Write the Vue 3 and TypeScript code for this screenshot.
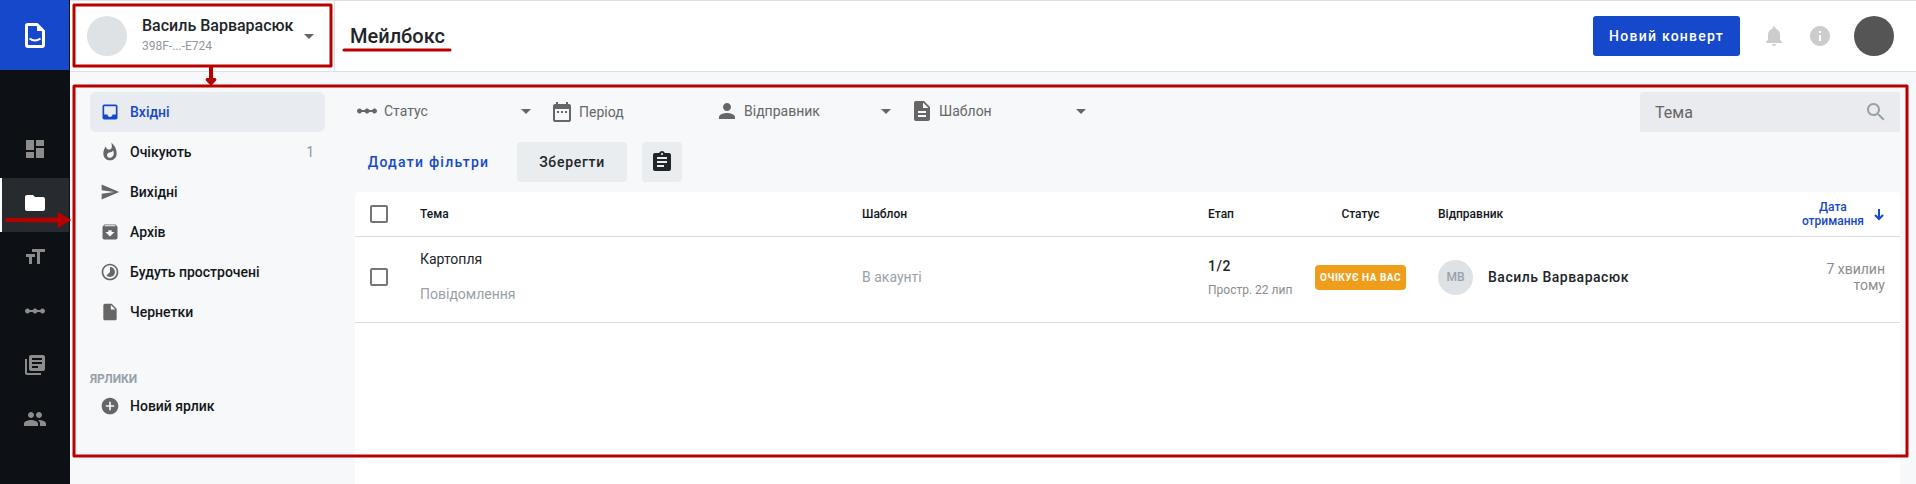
<script setup lang="ts">
interface MenuItem {
  label: string
  path: string
  count?: number
  active?: boolean
}

interface Filter {
  key: string
  label: string
  path: string
  caret: boolean
}

const scalePath =
  'M19.5 9.5c-1.03 0-1.9.62-2.29 1.5h-2.92c-.39-.88-1.26-1.5-2.29-1.5s-1.9.62-2.29 1.5H6.79c-.39-.88-1.26-1.5-2.29-1.5C3.12 9.5 2 10.62 2 12s1.12 2.5 2.5 2.5c1.03 0 1.9-.62 2.29-1.5h2.92c.39.88 1.26 1.5 2.29 1.5s1.9-.62 2.29-1.5h2.92c.39.88 1.26 1.5 2.29 1.5 1.38 0 2.5-1.12 2.5-2.5s-1.12-2.5-2.5-2.5z'

const rail = [
  { name: 'dashboard', path: 'M3 13h8V3H3v10zm0 8h8v-6H3v6zm10 0h8V11h-8v10zm0-18v6h8V3h-8z' },
  { name: 'mailbox', active: true, path: 'M10 4H4c-1.1 0-1.99.9-1.99 2L2 18c0 1.1.9 2 2 2h16c1.1 0 2-.9 2-2V8c0-1.1-.9-2-2-2h-8l-2-2z' },
  { name: 'templates', path: 'M9 4v3h5v12h3V7h5V4H9zm-6 8h3v7h3v-7h3V9H3v3z' },
  { name: 'scenarios', path: scalePath },
  { name: 'directories', path: 'M4 6H2v14c0 1.1.9 2 2 2h14v-2H4V6zm16-4H8c-1.1 0-2 .9-2 2v12c0 1.1.9 2 2 2h12c1.1 0 2-.9 2-2V4c0-1.1-.9-2-2-2zm-1 9H9V9h10v2zm-4 4H9v-2h6v2zm4-8H9V5h10v2z' },
  { name: 'users', path: 'M16 11c1.66 0 2.99-1.34 2.99-3S17.66 5 16 5c-1.66 0-3 1.34-3 3s1.34 3 3 3zm-8 0c1.66 0 2.99-1.34 2.99-3S9.66 5 8 5C6.34 5 5 6.34 5 8s1.34 3 3 3zm0 2c-2.33 0-7 1.17-7 3.5V19h14v-2.5c0-2.33-4.67-3.5-7-3.5zm8 0c-.29 0-.62.02-.97.05 1.16.84 1.97 1.97 1.97 3.45V19h6v-2.5c0-2.33-4.67-3.5-7-3.5z' },
]

const menu: MenuItem[] = [
  { label: 'Вхідні', active: true, path: 'M19 3H4.99c-1.11 0-1.98.89-1.98 2L3 19c0 1.1.88 2 1.99 2H19c1.1 0 2-.9 2-2V5c0-1.11-.9-2-2-2zm0 12h-4c0 1.66-1.35 3-3 3s-3-1.34-3-3H4.99V5H19v10z' },
  { label: 'Очікують', count: 1, path: 'M13.5.67s.74 2.65.74 4.8c0 2.06-1.35 3.73-3.41 3.73-2.07 0-3.63-1.67-3.63-3.73l.03-.36C5.21 7.51 4 10.62 4 14c0 4.42 3.58 8 8 8s8-3.58 8-8C20 8.61 17.41 3.8 13.5.67zM11.71 19c-1.78 0-3.22-1.4-3.22-3.14 0-1.62 1.05-2.76 2.81-3.12 1.77-.36 3.6-1.21 4.62-2.58.39 1.29.59 2.65.59 4.04 0 2.65-2.15 4.8-4.8 4.8z' },
  { label: 'Вихідні', path: 'M2.01 21L23 12 2.01 3 2 10l15 2-15 2z' },
  { label: 'Архів', path: 'M20.54 5.23l-1.39-1.68C18.88 3.21 18.47 3 18 3H6c-.47 0-.88.21-1.16.55L3.46 5.23C3.17 5.57 3 6.02 3 6.5V19c0 1.1.9 2 2 2h14c1.1 0 2-.9 2-2V6.5c0-.48-.17-.93-.46-1.27zM12 17.5L6.5 12H10v-2h4v2h3.5L12 17.5zM5.12 5l.81-1h12l.94 1H5.12z' },
  { label: 'Будуть прострочені', path: 'M16.24 7.76C15.07 6.59 13.54 6 12 6v6l-4.24 4.24c2.34 2.34 6.14 2.34 8.49 0 2.34-2.34 2.34-6.14-.01-8.48zM12 2C6.48 2 2 6.48 2 12s4.48 10 10 10 10-4.48 10-10S17.52 2 12 2zm0 18c-4.42 0-8-3.58-8-8s3.58-8 8-8 8 3.58 8 8-3.58 8-8 8z' },
  { label: 'Чернетки', path: 'M6 2c-1.1 0-1.99.9-1.99 2L4 20c0 1.1.89 2 1.99 2H18c1.1 0 2-.9 2-2V8l-6-6H6zm7 7V3.5L18.5 9H13z' },
]

const filters: Filter[] = [
  { key: 'status', label: 'Статус', path: scalePath, caret: true },
  { key: 'period', label: 'Період', caret: false, path: 'M9 11H7v2h2v-2zm4 0h-2v2h2v-2zm4 0h-2v2h2v-2zm2-7h-1V2h-2v2H8V2H6v2H5c-1.11 0-1.99.9-1.99 2L3 20c0 1.1.89 2 2 2h14c1.1 0 2-.9 2-2V6c0-1.1-.9-2-2-2zm0 16H5V9h14v11z' },
  { key: 'sender', label: 'Відправник', caret: true, path: 'M12 12c2.21 0 4-1.79 4-4s-1.79-4-4-4-4 1.79-4 4 1.79 4 4 4zm0 2c-2.67 0-8 1.34-8 4v2h16v-2c0-2.66-5.33-4-8-4z' },
  { key: 'template', label: 'Шаблон', caret: true, path: 'M14 2H6c-1.1 0-1.99.9-1.99 2L4 20c0 1.1.89 2 1.99 2H18c1.1 0 2-.9 2-2V8l-6-6zm2 16H8v-2h8v2zm0-4H8v-2h8v2zm-3-5V3.5L18.5 9H13z' },
]
</script>

<template>
  <div class="app">
    <aside class="rail">
      <div class="logo">
        <svg width="20" height="25" viewBox="0 0 20 25">
          <path d="M2.5 1.5H12L18.5 8V22a1.5 1.5 0 0 1-1.5 1.5H3A1.5 1.5 0 0 1 1.5 22V2.5a1 1 0 0 1 1-1z" fill="none" stroke="#fff" stroke-width="3" />
          <path d="M12 1v7h7z" fill="#fff" />
          <path d="M4.500 15.500q5.500 4 11 0" fill="none" stroke="#fff" stroke-width="2" />
        </svg>
      </div>
      <nav class="rail-nav">
        <a v-for="item in rail" :key="item.name" class="rail-item" :class="{ active: item.active }">
          <svg class="i24" viewBox="0 0 24 24"><path :d="item.path" /></svg>
        </a>
      </nav>
    </aside>

    <div class="main">
      <header class="header">
        <div class="account">
          <span class="avatar"></span>
          <div class="account-text">
            <div class="account-name">Василь Варварасюк</div>
            <div class="account-id">398F-...-E724</div>
          </div>
          <i class="caret"></i>
        </div>
        <h1 class="title">Мейлбокс</h1>
        <div class="header-actions">
          <button class="primary">Новий конверт</button>
          <svg class="i24 bell" viewBox="0 0 24 24"><path d="M12 22c1.1 0 2-.9 2-2h-4c0 1.1.89 2 2 2zm6-6v-5c0-3.07-1.64-5.64-4.5-6.32V4c0-.83-.67-1.5-1.5-1.5s-1.5.67-1.5 1.5v.68C7.63 5.36 6 7.92 6 11v5l-2 2v1h16v-1l-2-2z" /></svg>
          <svg class="i24 info" viewBox="0 0 24 24"><path d="M12 2C6.48 2 2 6.48 2 12s4.48 10 10 10 10-4.48 10-10S17.52 2 12 2zm1 15h-2v-6h2v6zm0-8h-2V7h2v2z" /></svg>
          <span class="avatar dark"></span>
        </div>
      </header>

      <div class="body">
        <nav class="menu">
          <a v-for="item in menu" :key="item.label" class="menu-item" :class="{ active: item.active }">
            <svg class="i20" viewBox="0 0 24 24"><path :d="item.path" /></svg>
            <span>{{ item.label }}</span>
            <span v-if="item.count" class="count">{{ item.count }}</span>
          </a>
          <div class="menu-title">ЯРЛИКИ</div>
          <a class="menu-item">
            <svg class="i20" viewBox="0 0 24 24"><path d="M12 2C6.48 2 2 6.48 2 12s4.48 10 10 10 10-4.48 10-10S17.52 2 12 2zm5 11h-4v4h-2v-4H7v-2h4V7h2v4h4v2z" /></svg>
            <span>Новий ярлик</span>
          </a>
        </nav>

        <section class="content">
          <div class="filters">
            <div v-for="f in filters" :key="f.key" class="filter" :class="f.key">
              <svg class="i24" viewBox="0 0 24 24"><path :d="f.path" /></svg>
              <span>{{ f.label }}</span>
              <i v-if="f.caret" class="caret"></i>
            </div>
            <div class="search">
              <span>Тема</span>
              <svg class="i24" viewBox="0 0 24 24"><path d="M15.5 14h-.79l-.28-.27C15.41 12.59 16 11.11 16 9.5 16 5.91 13.09 3 9.5 3S3 5.91 3 9.5 5.91 16 9.5 16c1.61 0 3.09-.59 4.23-1.57l.27.28v.79l5 4.99L20.49 19l-4.99-5zm-6 0C7.01 14 5 11.99 5 9.5S7.01 5 9.5 5 14 7.01 14 9.5 11.99 14 9.5 14z" /></svg>
            </div>
          </div>

          <div class="filter-actions">
            <button class="link">Додати фільтри</button>
            <button class="secondary">Зберегти</button>
            <button class="square">
              <svg class="i24" viewBox="0 0 24 24"><path d="M19 3h-4.18C14.4 1.84 13.3 1 12 1c-1.3 0-2.4.84-2.82 2H5c-1.1 0-2 .9-2 2v14c0 1.1.9 2 2 2h14c1.1 0 2-.9 2-2V5c0-1.1-.9-2-2-2zm-7 0c.55 0 1 .45 1 1s-.45 1-1 1-1-.45-1-1 .45-1 1-1zm2 14H7v-2h7v2zm3-4H7v-2h10v2zm0-4H7V7h10v2z" /></svg>
            </button>
          </div>

          <div class="table">
            <div class="row head">
              <i class="check"></i>
              <span>Тема</span>
              <span>Шаблон</span>
              <span>Етап</span>
              <span class="center">Статус</span>
              <span>Відправник</span>
              <span class="sorted">
                <span>Дата<br />отримання</span>
                <svg width="12" height="13" viewBox="0 0 12 13"><path d="M6 1v10M2 7l4 4 4-4" fill="none" stroke="#1648cc" stroke-width="2" /></svg>
              </span>
            </div>
            <div class="row item">
              <i class="check"></i>
              <div class="subject">
                <div>Картопля</div>
                <div class="muted message">Повідомлення</div>
              </div>
              <span class="muted">В акаунті</span>
              <div class="stage">
                <div class="step">1/2</div>
                <div class="due">Простр. 22 лип</div>
              </div>
              <span class="badge">ОЧІКУЄ НА ВАС</span>
              <div class="sender-cell">
                <span class="initials">МВ</span>
                <span class="sender-name">Василь Варварасюк</span>
              </div>
              <span class="date">7 хвилин<br />тому</span>
            </div>
          </div>
        </section>
      </div>
    </div>

    <svg class="marks" width="1916" height="484" viewBox="0 0 1916 484">
      <g fill="none" stroke="#b90000" stroke-width="3" stroke-linejoin="round">
        <rect x="74" y="5" width="257" height="61" />
        <rect x="74" y="86" width="1833" height="370" />
        <path d="M344 50H450" stroke-linecap="round" />
      </g>
      <g fill="#b90000" stroke="#b90000" stroke-linejoin="round">
        <path d="M209.500 66h3v12.500h3l.5 1.500-4 4.500h-2l-4-4.500.5-1.500h3z" />
        <path d="M7 218.500l51-.5v-5.500l12.500 7.500-12.500 7.500v-5.500l-51-.5a1.500 1.500 0 0 1 0-3z" />
      </g>
    </svg>
  </div>
</template>

<style>
body {
  margin: 0;
  overflow: hidden;
}
</style>

<style scoped>
.app {
  position: relative;
  display: flex;
  width: 1916px;
  height: 484px;
  overflow: hidden;
  background: #f7f8fa;
  color: #212529;
  font: 400 14px/20px Roboto, 'Liberation Sans', sans-serif;
}
.app * {
  box-sizing: border-box;
}
svg {
  display: block;
  flex: none;
}
button {
  border: 0;
  padding: 0;
  font: inherit;
}
.i24 {
  width: 24px;
  height: 24px;
  fill: currentColor;
}
.i20 {
  width: 20px;
  height: 20px;
  fill: currentColor;
}
.marks {
  position: absolute;
  inset: 0;
}

.rail {
  width: 70px;
  background: #0d1014;
}
.logo {
  width: 69px;
  height: 70px;
  padding: 23px 0 0 25px;
  background: #1648cc;
}
.rail-nav {
  padding-top: 54px;
}
.rail-item {
  display: flex;
  width: 69px;
  height: 54px;
  padding: 13px 0 0 23px;
  color: #8c8c8c;
}
.rail-item.active {
  background: #272a2e;
  border-left: 2px solid #fff;
  padding-left: 21px;
  color: #fff;
}

.main {
  flex: 1;
  min-width: 0;
}
.header {
  display: flex;
  height: 72px;
  border: solid #dce0e4;
  border-width: 1px 0;
  background: #fff;
}
.account {
  display: flex;
  width: 265px;
  padding: 15px 0 0 17px;
  border-right: 1px solid #dce0e4;
}
.avatar {
  flex: none;
  width: 40px;
  height: 40px;
  border-radius: 50%;
  background: #dee2e5;
}
.avatar.dark {
  margin-left: 22px;
  background: #555;
}
.account-text {
  width: 154px;
  margin-left: 15px;
  white-space: nowrap;
}
.account-name {
  font-weight: 500;
  font-size: 16px;
}
.account-id {
  color: #8f979e;
  font-size: 12px;
}
.caret {
  flex: none;
  width: 0;
  height: 0;
  border: 5px solid transparent;
  border-top-color: #666;
  border-bottom: 0;
}
.account .caret {
  margin: 18px 0 0 8px;
}
.title {
  margin: 23px 0 0 15px;
  font-weight: 500;
  font-size: 20px;
  line-height: 24px;
}
.header-actions {
  display: flex;
  align-items: center;
  margin-left: auto;
  padding-right: 22px;
  color: #ccc;
}
.primary {
  width: 147px;
  height: 40px;
  border-radius: 3px;
  background: #1648cc;
  color: #fff;
  font-weight: 500;
  letter-spacing: 1.25px;
}
.bell,
.info {
  margin-left: 22px;
}

.body {
  display: flex;
  height: 412px;
}
.menu {
  width: 235px;
  margin-left: 20px;
  padding-top: 20px;
  font-weight: 500;
  color: #121619;
}
.menu-item {
  display: flex;
  align-items: center;
  gap: 10px;
  height: 40px;
  padding: 0 11px 0 10px;
  border-radius: 6px;
}
.menu-item svg {
  color: #666;
}
.menu-item.active,
.menu-item.active svg {
  color: #1648cc;
}
.menu-item.active {
  background: #e8ebf0;
}
.count {
  margin-left: auto;
  color: #8f979e;
  font-weight: 400;
}
.menu-title {
  height: 20px;
  margin: 37px 0 -3px;
  color: #98a1a9;
  font-weight: 700;
  font-size: 12px;
}

.content {
  display: flex;
  flex-direction: column;
  width: 1545px;
  margin-left: 30px;
  padding-top: 20px;
}
.filters {
  display: flex;
  height: 40px;
  color: #666;
}
.filter {
  display: flex;
  align-items: center;
  gap: 5px;
  width: 176px;
  height: 38px;
}
.filter .caret {
  margin-left: auto;
}
.status {
  margin-right: 19px;
}
.period {
  width: 165px;
  height: 40px;
}
.template {
  margin-left: 19px;
}
.search {
  display: flex;
  align-items: center;
  justify-content: space-between;
  width: 260px;
  margin-left: auto;
  padding: 0 12px 0 15px;
  border-radius: 4px 4px 0 0;
  background: #e9ebef;
  font-size: 16px;
}
.search span {
  padding-top: 1px;
}
.search svg {
  color: #98a1a9;
}
.filter-actions {
  display: flex;
  height: 40px;
  margin: 10px 0;
}
.filter-actions button {
  border-radius: 4px;
  letter-spacing: 1.25px;
  font-weight: 500;
}
.link {
  width: 147px;
  background: none;
  color: #1648cc;
}
.filter-actions .secondary {
  width: 110px;
  margin-left: 15px;
  background: #eaedf0;
  color: #212529;
  letter-spacing: 0.7px;
}
.square {
  display: flex;
  align-items: center;
  justify-content: center;
  width: 40px;
  margin-left: 15px;
  background: #eaedf0;
  color: #212529;
}

.table {
  flex: 1;
  border-radius: 4px 4px 0 0;
  background: #fff;
}
.row {
  display: grid;
  grid-template-columns: 65px 442px 346px 107px 123px 300px 1fr;
  align-items: center;
  padding-right: 15px;
  border-bottom: 1px solid #dcdcdc;
}
.head {
  height: 45px;
  color: #121619;
  font-weight: 500;
  font-size: 12px;
}
.item {
  height: 86px;
  padding-bottom: 5px;
}
.check {
  width: 18px;
  height: 18px;
  margin-left: 15px;
  border: 2px solid #757575;
  border-radius: 2px;
}
.center {
  width: 91px;
  text-align: center;
}
.sorted {
  display: flex;
  align-items: center;
  justify-content: flex-end;
  gap: 9px;
  color: #1648cc;
  line-height: 14px;
  text-align: center;
}
.muted {
  color: #98a1a9;
}
.subject {
  padding-bottom: 2px;
}
.message {
  margin-top: 15px;
}
.stage {
  padding-top: 2px;
}
.step {
  font-weight: 500;
  letter-spacing: 0.5px;
}
.due {
  margin-top: 4px;
  color: #8c8c8c;
  font-size: 12px;
}
.badge {
  width: 91px;
  height: 25px;
  border-radius: 4px;
  background: #ef9e1b;
  color: #fff;
  font-weight: 700;
  font-size: 10px;
  line-height: 25px;
  letter-spacing: 0.5px;
  text-align: center;
  white-space: nowrap;
}
.sender-cell {
  display: flex;
  align-items: center;
  gap: 15px;
}
.initials {
  width: 35px;
  height: 35px;
  border-radius: 50%;
  background: #dee2e5;
  color: #98a1a9;
  font-weight: 500;
  font-size: 12px;
  line-height: 35px;
  text-align: center;
}
.sender-name {
  font-weight: 500;
  letter-spacing: 0.5px;
}
.date {
  color: #8c8c8c;
  line-height: 16px;
  text-align: right;
}
</style>
